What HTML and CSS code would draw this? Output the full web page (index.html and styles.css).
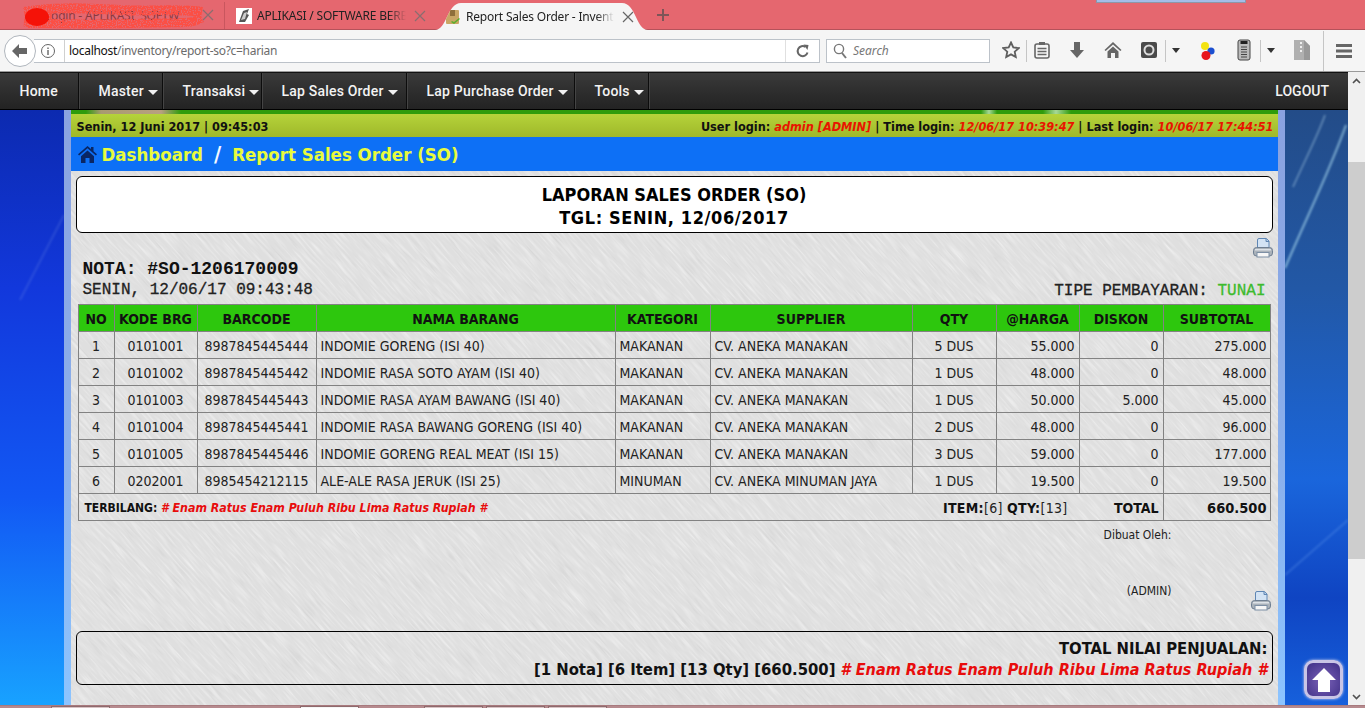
FILE: index.html
```html
<!DOCTYPE html>
<html lang="id">
<head>
<meta charset="utf-8">
<title>Report Sales Order - Inventory</title>
<link rel="stylesheet" href="styles.css">
</head>
<body>
<div class="browser">
  <div class="tabstrip">
    <div class="tab tab-one">
      <span class="tab-label">Login - APLIKASI  SOFTW</span>
      <svg class="scribble" width="190" height="26" viewBox="0 0 190 26"><defs><filter id="spray" filterUnits="userSpaceOnUse" x="0" y="0" width="190" height="26"><feTurbulence type="fractalNoise" baseFrequency="0.8" numOctaves="1" seed="4" result="n"/><feColorMatrix in="n" type="matrix" values="0 0 0 0 0.96  0 0 0 0 0.08  0 0 0 0 0.06  0 0 0 16 -6.4" result="m"/><feComposite in="m" in2="SourceAlpha" operator="in"/></filter></defs><path d="M4 9 C 30 4, 60 5, 100 7 S 160 5, 182 9" fill="none" stroke="#f00" stroke-width="10" filter="url(#spray)"/><path d="M4 19 C 40 22, 90 21, 130 20 S 170 21, 182 15" fill="none" stroke="#f00" stroke-width="9" filter="url(#spray)"/><path d="M8 14h24" stroke="#f00" stroke-width="22" filter="url(#spray)"/><ellipse cx="17" cy="14" rx="12" ry="9" fill="#f51208"/></svg>
      <svg class="tab-close" width="12" height="12" viewBox="0 0 12 12"><path d="M1 1l10 10M11 1L1 11" stroke="#8a6d6f" stroke-width="1.2"/></svg>
    </div>
    <div class="tab tab-two">
      <svg class="favicon" width="16" height="16" viewBox="0 0 16 16"><rect width="16" height="16" fill="#fff"/><path d="M3 14L7 3l6-2-2 5 2 1-4 7z" fill="#555"/><path d="M5 12l3-7 3-1-2 7z" fill="#ccc"/></svg>
      <span class="tab-label fade">APLIKASI / SOFTWARE BERB</span>
      <svg class="tab-close" width="12" height="12" viewBox="0 0 12 12"><path d="M1 1l10 10M11 1L1 11" stroke="#8a6d6f" stroke-width="1.2"/></svg>
    </div>
    <div class="tab tab-active">
      <svg class="favicon" width="16" height="16" viewBox="0 0 16 16"><rect x="1" y="1" width="13" height="14" rx="1" fill="#c9a765"/><rect x="5" y="1" width="5" height="6" fill="#8e6f3a"/><path d="M6 13l3 2 6-5-1-1-5 4-2-1z" fill="#5cae2e"/></svg>
      <span class="tab-label fade">Report Sales Order - Inventor</span>
      <svg class="tab-close" width="12" height="12" viewBox="0 0 12 12"><path d="M1 1l10 10M11 1L1 11" stroke="#666" stroke-width="1.2"/></svg>
    </div>
    <svg class="new-tab" width="12" height="12" viewBox="0 0 12 12"><path d="M6 0v12M0 6h12" stroke="#7d5558" stroke-width="2"/></svg>
    <div class="window-peek"></div>
  </div>

  <div class="toolbar">
    <button class="back" type="button"><svg width="18" height="16" viewBox="0 0 18 16"><path d="M8 1L1 8l7 7v-4h8V5H8z" fill="#666"/></svg></button>
    <div class="urlbar">
      <svg class="info" width="16" height="16" viewBox="0 0 16 16"><circle cx="8" cy="8" r="6.5" fill="none" stroke="#666"/><path d="M8 4.5v1.5M8 7v5" stroke="#666" stroke-width="1.4"/></svg>
      <span class="url"><b>localhost</b>/inventory/report-so?c=harian</span>
      <span class="reload"><svg width="14" height="14" viewBox="0 0 14 14"><path d="M11.5 8.5A5 5 0 1 1 9.5 3" fill="none" stroke="#666" stroke-width="2"/><path d="M7.5 0.5l5 .5-1 5z" fill="#666"/></svg></span>
    </div>
    <div class="searchbar">
      <svg width="15" height="16" viewBox="0 0 15 16"><circle cx="6" cy="6" r="4.6" fill="none" stroke="#777" stroke-width="1.4"/><path d="M9 10l4 5" stroke="#777" stroke-width="2"/></svg>
      <span>Search</span>
    </div>
    <div class="tools">
      <svg class="t-star" width="18" height="18" viewBox="0 0 18 18"><path d="M9 1.5l2.3 5 5.4.6-4 3.6 1.1 5.4L9 13.4l-4.8 2.7 1.1-5.4-4-3.6 5.4-.6z" fill="none" stroke="#5f5f5f" stroke-width="1.8"/></svg>
      <i class="sep s1"></i>
      <svg class="t-clip" width="16" height="18" viewBox="0 0 16 18"><rect x="1" y="3" width="14" height="14" rx="2" fill="none" stroke="#666" stroke-width="1.6"/><rect x="5" y="1" width="6" height="3" fill="#666"/><path d="M3.5 7.5h9M3.5 10.500h9M3.500 13.500h9" stroke="#666" stroke-width="1.4"/></svg>
      <svg class="t-down" width="16" height="18" viewBox="0 0 16 18"><path d="M5 1h6v8h4l-7 8-7-8h4z" fill="#666"/></svg>
      <svg class="t-home" width="18" height="18" viewBox="0 0 18 18"><path d="M9 1L0.500 9l1.200 1L9 3.500 16.300 10l1.200-1z" fill="#666"/><path d="M3.500 10.500L9 5.500l5.500 5V17h-3.500v-5H7v5H3.500z" fill="#666"/></svg>
      <svg class="t-cam" width="16" height="18" viewBox="0 0 16 18"><rect y="1" width="16" height="16" rx="2" fill="#4a4a4a"/><circle cx="8" cy="9" r="4.500" fill="none" stroke="#ddd" stroke-width="2"/></svg>
      <i class="sep s2"></i>
      <i class="drop d1"></i>
      <svg class="t-dots" width="16" height="20" viewBox="0 0 16 20"><circle cx="5" cy="5" r="4" fill="#f3e312"/><circle cx="11" cy="10" r="3.600" fill="#1c4fd0"/><circle cx="6" cy="14.500" r="4.500" fill="#e8141c"/></svg>
      <svg class="t-bat" width="14" height="22" viewBox="0 0 14 22"><rect x="1" y="1" width="12" height="20" rx="2" fill="#bbb" stroke="#444"/><rect x="3.500" y="2" width="7" height="3" fill="#222"/><path d="M4 8h6M4 10.500h6M4 13h6M4 15.500h6M4 18h6" stroke="#444"/></svg>
      <i class="sep s3"></i>
      <i class="drop d2"></i>
      <svg class="t-zip" width="16" height="20" viewBox="0 0 16 20"><path d="M0 0h10l6 6v14H0z" fill="#b0b0b0"/><path d="M10 0l6 6v14h-6z" fill="#999"/><path d="M6 3h2M6 7h2M6 11h2" stroke="#eee" stroke-width="2"/></svg>
      <i class="sep s4"></i>
      <svg class="t-menu" width="16" height="16" viewBox="0 0 16 16"><path d="M0 2.500h16M0 8h16M0 13.500h16" stroke="#666" stroke-width="3"/></svg>
    </div>
  </div>

  <div class="window">
    <div class="viewport">
      <nav class="navbar">
        <a class="nav-item home">Home</a>
        <a class="nav-item master">Master<i class="caret"></i></a>
        <a class="nav-item transaksi">Transaksi<i class="caret"></i></a>
        <a class="nav-item lapso">Lap Sales Order<i class="caret"></i></a>
        <a class="nav-item lappo">Lap Purchase Order<i class="caret"></i></a>
        <a class="nav-item tools-menu">Tools<i class="caret"></i></a>
        <a class="logout">LOGOUT</a>
      </nav>
      <div class="stage">
        <svg class="backdrop" width="1348" height="595" viewBox="0 0 1348 595" preserveAspectRatio="none" aria-hidden="true">
          <defs>
            <linearGradient id="bgL" x1="0" y1="0" x2="0" y2="1"><stop offset="0" stop-color="#0c2ab0"/><stop offset=".3" stop-color="#1238dc"/><stop offset=".65" stop-color="#1258f4"/><stop offset="1" stop-color="#18a2ff"/></linearGradient>
            <linearGradient id="bgR" x1="0" y1="0" x2="0" y2="1"><stop offset="0" stop-color="#234c88"/><stop offset=".3" stop-color="#2258a6"/><stop offset=".62" stop-color="#1a66dc"/><stop offset=".82" stop-color="#0f44c2"/><stop offset="1" stop-color="#1660dc"/></linearGradient>
            <filter id="soft"><feGaussianBlur stdDeviation="1"/></filter>
          </defs>
          <rect width="66" height="595" fill="url(#bgL)"/>
          <rect x="1284" width="64" height="595" fill="url(#bgR)"/>
          <path d="M20 190 L64 105" stroke="#8ea8ea" stroke-width="2" opacity=".2" filter="url(#soft)" fill="none"/>
          <path d="M1285 158 C1310 100 1330 60 1346 15" stroke="#a8d8ee" stroke-width="2" opacity=".7" fill="none" filter="url(#soft)"/>
          <path d="M1293 77 C1305 50 1318 25 1325 5" stroke="#9cc0dc" stroke-width="1.500" opacity=".6" fill="none" filter="url(#soft)"/>
          <path d="M1285 465 L1348 410" stroke="#6aa0f0" stroke-width="2" opacity=".3" fill="none" filter="url(#soft)"/>
        </svg>
        <main class="sheet">
          <svg class="brushed" width="1207" height="595" viewBox="0 0 1207 595" aria-hidden="true">
            <defs>
              <filter id="brush" filterUnits="userSpaceOnUse" x="-100" y="-1300" width="2200" height="2200">
                <feTurbulence type="fractalNoise" baseFrequency="0.035 0.5" numOctaves="2" seed="7" result="n"/>
                <feColorMatrix in="n" type="matrix" values="0 0 0 0 1  0 0 0 0 1  0 0 0 0 1  1.2 0 0 0 -.55" result="light"/>
                <feColorMatrix in="n" type="matrix" values="0 0 0 0 .45  0 0 0 0 .45  0 0 0 0 .45  0 -.7 0 0 .3" result="dark"/>
                <feMerge><feMergeNode in="dark"/><feMergeNode in="light"/></feMerge>
              </filter>
            </defs>
            <rect x="-100" y="-1300" width="2200" height="2200" fill="#fff" filter="url(#brush)" transform="rotate(48)"/>
          </svg>
          <div class="banner"></div>
          <div class="infobar">
            <span>Senin, 12 Juni 2017 | 09:45:03</span>
            <span>User login: <em>admin [ADMIN]</em> | Time login: <em>12/06/17 10:39:47</em> | Last login: <em>10/06/17 17:44:51</em></span>
          </div>
          <div class="crumbs">
            <svg class="crumb-home" width="19" height="17" viewBox="0 0 19 17"><path d="M9.500 0L0 8.300l1.100 1.200L9.500 2.300l8.400 7.200L19 8.300 15.500 5.200V1h-2.500v2zM3 10.200L9.500 4.500l6.500 5.700V17h-4.500v-5h-4v5H3z" fill="#0a2663"/></svg>
            <a>Dashboard</a><span class="slash">/</span><a>Report Sales Order (SO)</a>
          </div>
          <section class="report-title">LAPORAN SALES ORDER (SO)<br><span class="report-date">TGL: SENIN, 12/06/2017</span></section>
          <div class="print-row">
            <svg class="printer" width="20" height="20" viewBox="0 0 20 20"><use href="#printer-glyph"/></svg>
          </div>
          <div class="nota">NOTA: #SO-1206170009</div>
          <div class="nota-meta">
            <span>SENIN, 12/06/17 09:43:48</span>
            <span class="pay">TIPE PEMBAYARAN: <b>TUNAI</b></span>
          </div>
          <table class="items">
            <colgroup>
              <col class="c-no"><col class="c-kode"><col class="c-bar"><col class="c-nama"><col class="c-kat"><col class="c-sup"><col class="c-qty"><col class="c-harga"><col class="c-disk"><col class="c-sub">
            </colgroup>
            <thead>
              <tr><th>NO</th><th>KODE BRG</th><th>BARCODE</th><th>NAMA BARANG</th><th>KATEGORI</th><th>SUPPLIER</th><th>QTY</th><th>@HARGA</th><th>DISKON</th><th>SUBTOTAL</th></tr>
            </thead>
            <tbody>
              <tr><td class="mid">1</td><td class="mid">0101001</td><td class="mid">8987845445444</td><td>INDOMIE GORENG (ISI 40)</td><td>MAKANAN</td><td>CV. ANEKA MANAKAN</td><td class="mid">5 DUS</td><td class="num">55.000</td><td class="num">0</td><td class="num">275.000</td></tr>
              <tr><td class="mid">2</td><td class="mid">0101002</td><td class="mid">8987845445442</td><td>INDOMIE RASA SOTO AYAM (ISI 40)</td><td>MAKANAN</td><td>CV. ANEKA MANAKAN</td><td class="mid">1 DUS</td><td class="num">48.000</td><td class="num">0</td><td class="num">48.000</td></tr>
              <tr><td class="mid">3</td><td class="mid">0101003</td><td class="mid">8987845445443</td><td>INDOMIE RASA AYAM BAWANG (ISI 40)</td><td>MAKANAN</td><td>CV. ANEKA MANAKAN</td><td class="mid">1 DUS</td><td class="num">50.000</td><td class="num">5.000</td><td class="num">45.000</td></tr>
              <tr><td class="mid">4</td><td class="mid">0101004</td><td class="mid">8987845445441</td><td>INDOMIE RASA BAWANG GORENG (ISI 40)</td><td>MAKANAN</td><td>CV. ANEKA MANAKAN</td><td class="mid">2 DUS</td><td class="num">48.000</td><td class="num">0</td><td class="num">96.000</td></tr>
              <tr><td class="mid">5</td><td class="mid">0101005</td><td class="mid">8987845445446</td><td>INDOMIE GORENG REAL MEAT (ISI 15)</td><td>MAKANAN</td><td>CV. ANEKA MANAKAN</td><td class="mid">3 DUS</td><td class="num">59.000</td><td class="num">0</td><td class="num">177.000</td></tr>
              <tr><td class="mid">6</td><td class="mid">0202001</td><td class="mid">8985454212115</td><td>ALE-ALE RASA JERUK (ISI 25)</td><td>MINUMAN</td><td>CV. ANEKA MINUMAN JAYA</td><td class="mid">1 DUS</td><td class="num">19.500</td><td class="num">0</td><td class="num">19.500</td></tr>
            </tbody>
            <tfoot>
              <tr>
                <td colspan="9" class="foot-left">
                  <div class="foot-flex">
                    <span class="terbilang">TERBILANG: <em># Enam Ratus Enam Puluh Ribu Lima Ratus Rupiah #</em></span>
                    <span class="counts"><b>ITEM:</b>[6] <b>QTY:</b>[13]</span>
                    <span class="total-label">TOTAL</span>
                  </div>
                </td>
                <td class="num total-value">660.500</td>
              </tr>
            </tfoot>
          </table>
          <div class="sign-row">
            <div class="sign">
              <span>Dibuat Oleh:</span>
              <span>(ADMIN)</span>
            </div>
            <svg class="printer" width="20" height="20" viewBox="0 0 20 20">
              <g id="printer-glyph">
                <path d="M4.500 10V2A1.500 1.500 0 0 1 6 .5h7.500L16 3v7z" fill="#d3e3f4" stroke="#5f86b4"/>
                <path d="M13 .5V3.500h3" fill="#b4cce6" stroke="#5f86b4"/>
                <rect x="0.500" y="9.500" width="19" height="8.500" rx="3" fill="#aab2ba" stroke="#6f7f92"/>
                <rect x="2" y="11" width="16" height="1.500" fill="#dde2e7"/>
                <rect x="4" y="14.500" width="12" height="4.500" fill="#f6f6f6" stroke="#7d8fa5"/>
              </g>
            </svg>
          </div>
          <section class="grand-total">
            <strong>TOTAL NILAI PENJUALAN:</strong>
            <div><strong>[1 Nota] [6 Item] [13 Qty] [660.500]</strong> <em># Enam Ratus Enam Puluh Ribu Lima Ratus Rupiah #</em></div>
          </section>
        </main>
        <button class="to-top" type="button" aria-label="Ke atas"><svg width="26" height="26" viewBox="0 0 26 26"><path d="M13 1L1 13h6v12h12V13h6z" fill="#fff"/></svg></button>
      </div>
    </div>
    <div class="scrollbar">
      <svg width="9" height="6" viewBox="0 0 9 6"><path d="M1 5l3.500-3.500L8 5" fill="none" stroke="#505050" stroke-width="1.600"/></svg>
      <div class="thumb"></div>
      <svg width="9" height="6" viewBox="0 0 9 6"><path d="M1 1l3.500 3.500L8 1" fill="none" stroke="#505050" stroke-width="1.600"/></svg>
    </div>
  </div>
  <div class="taskbar">
    <i class="task t1"></i><i class="task t2"></i><i class="task t3"></i><i class="task t4"></i><i class="task t5"></i>
  </div>
</div>
</body>
</html>
```

FILE: styles.css
```css
* { box-sizing: border-box; }
html, body { margin: 0; height: 100%; overflow: hidden; }
body { font-family: "Noto Sans", sans-serif; background: #f5f5f5; }
.browser { width: 1365px; height: 708px; display: flex; flex-direction: column; overflow: hidden; }

/* tabs */
.tabstrip { height: 30px; flex: none; background: #e5676f; border-bottom: 1px solid #b4525a; display: flex; align-items: flex-end; position: relative; }
.tab { display: flex; align-items: center; height: 27px; font-size: 12px; letter-spacing: -.2px; color: #222; flex: none; position: relative; }
.tab-one { width: 224px; padding-left: 45px; }
.tab-one .tab-label { width: 155px; white-space: pre; color: #8a3a3f; }
.scribble { position: absolute; left: 20px; top: 1px; }
.tab-one .tab-close { position: absolute; left: 202px; top: 7px; }
.tab-two { width: 211px; padding-left: 11px; border-left: 1px solid #c9565e; }
.tab-two .favicon { margin-right: 5px; }
.tab-two .tab-label { width: 149px; }
.tab-two .tab-close { margin-left: 8px; }
.tab-label { white-space: nowrap; }
.fade { -webkit-mask-image: linear-gradient(90deg, #000 88%, transparent); mask-image: linear-gradient(90deg, #000 88%, transparent); }
.tab-active { width: 213px; height: 27px; margin-bottom: -1px; padding-left: 10px; background: #f5f5f5; clip-path: path("M0 27 C12 27 12 0 26 0 L187 0 C201 0 201 27 213 27 Z"); }
.tab-active .favicon { margin-right: 5px; }
.tab-active .tab-label { width: 148px; }
.tab-active .tab-close { margin-left: 8px; }
.new-tab { margin: 0 0 8px 9px; flex: none; }
.window-peek { position: absolute; left: 1096px; top: 0; width: 150px; height: 3px; background: #a4bde8; border: 1px solid #8d97a8; border-top: 0; }

/* toolbar */
.toolbar { height: 42px; flex: none; background: #f5f5f5; border-bottom: 1px solid #9a9a9a; display: flex; align-items: center; position: relative; padding-left: 4px; }
.back { width: 32px; height: 32px; border-radius: 50%; border: 1px solid #b0b6bd; background: #fff; padding: 0; margin-right: -2px; position: relative; z-index: 1; display: flex; align-items: center; justify-content: center; }
.urlbar { width: 786px; height: 24px; background: #fff; border: 1px solid #bcc2c9; border-left: 0; display: flex; align-items: center; }
.info { margin-left: 6px; flex: none; }
.url { margin-left: 8px; font-size: 12px; letter-spacing: -.3px; color: #6b6b6b; flex: 1; border-left: 1px solid #d0d0d0; padding-left: 4px; line-height: 22px; }
.url b { font-weight: 400; color: #111; }
.reload { width: 34px; height: 22px; border-left: 1px solid #e0e0e0; display: flex; align-items: center; justify-content: center; }
.searchbar { width: 164px; height: 24px; margin-left: 6px; background: #fff; border: 1px solid #bcc2c9; display: flex; align-items: center; padding-left: 6px; gap: 5px; font-size: 12px; font-style: italic; color: #777; }
.tools { flex: 1; position: relative; height: 40px; }
.tools > * { position: absolute; }
.t-star { left: 12px; top: 10px; }
.s1 { left: 36px; } .s2 { left: 175px; } .s3 { left: 270px; } .s4 { left: 333px; top: 0 !important; height: 40px !important; }
.sep { width: 1px; height: 22px; top: 9px; background: #c5c5c5; }
.t-clip { left: 44px; top: 10px; }
.t-down { left: 79px; top: 10px; }
.t-home { left: 114px; top: 10px; }
.t-cam { left: 151px; top: 10px; }
.drop { width: 0; height: 0; border: 4px solid transparent; border-top: 5px solid #333; border-bottom: 0; top: 17px; }
.d1 { left: 182px; } .d2 { left: 277px; }
.t-dots { left: 210px; top: 10px; }
.t-bat { left: 247px; top: 8px; }
.t-zip { left: 304px; top: 9px; }
.t-menu { left: 346px; top: 12px; }

/* page */
.window { flex: 1; min-height: 0; display: flex; }
.viewport { width: 1348px; display: flex; flex-direction: column; min-height: 0; }
.scrollbar { width: 17px; background: #f0f0f0; display: flex; flex-direction: column; align-items: center; justify-content: space-between; padding: 6px 0 5px; }
.thumb { width: 17px; height: 397px; margin-top: 78px; margin-bottom: auto; background: #cdcdcd; }
.navbar { height: 38px; flex: none; display: flex; align-items: stretch; background: linear-gradient(#3a3a3a, #2e2e2e 50%, #232323); border-top: 1px solid #111; border-bottom: 1px solid #000; position: relative; z-index: 2; }
.nav-item { display: flex; align-items: center; padding-left: 19.5px; color: #f2f2f2; font: 500 14px/1 Roboto, sans-serif; letter-spacing: .2px; border-right: 1px solid #0c0c0c; box-shadow: 1px 0 0 #444; white-space: nowrap; }
.home { width: 79px; }
.master { width: 84px; }
.transaksi { width: 99px; }
.lapso { width: 145px; }
.lappo { width: 168px; }
.tools-menu { width: 74px; }
.caret { display: block; width: 0; height: 0; margin: 3px 0 0 4px; border: 5px solid transparent; border-top: 5px solid #f2f2f2; border-bottom: 0; }
.logout { margin-left: auto; padding-right: 19px; align-self: center; color: #f2f2f2; font: 500 14px/1 Roboto, sans-serif; }

.stage { flex: 1; min-height: 0; position: relative; display: flex; justify-content: center; overflow: hidden; background: #fff; }
.backdrop { position: absolute; left: 0; top: 0; }
.sheet { position: relative; z-index: 0; width: 1221px; border-left: 7px solid #8caae8; border-right: 7px solid #8caae8; border-image: linear-gradient(#8aa2e0, #8ab0ec 60%, #8cc4ff) 1; background-color: #dfdfdf; display: flex; flex-direction: column; font-family: "DejaVu Sans Condensed", "DejaVu Sans", sans-serif; font-stretch: condensed; }
.brushed { position: absolute; left: 0; top: 0; z-index: -1; }
.banner { height: 4px; flex: none; background: linear-gradient(90deg, #2f9c0c 15px, #a89a70 30px, #b8a080 90px, #2f9c0c 110px, #2f9c0c 910px, #a8d898 918px, #2f9c0c 926px, #2f9c0c 972px, #a8d898 985px, #2f9c0c 1000px); }
.infobar { height: 23px; flex: none; background: linear-gradient(#b5d33a, #9fb82a); display: flex; justify-content: space-between; align-items: center; padding: 2px 4px 0 6px; font-size: 12.6px; font-weight: 700; color: #111; }
.infobar em { color: #e81400; font-weight: 700; }
.crumbs { height: 34px; flex: none; background: #0d70f6; display: flex; align-items: center; padding: 1px 0 0 7px; font-size: 18.500px; font-weight: 700; color: #e8fb3c; }
.crumb-home { margin-right: 5px; }
.slash { margin: 0 11px; color: #f4f8ff; font-size: 22px; }
.report-title { height: 57px; margin: 5px 5px 0; flex: none; background: #fff; border: 1px solid #000; border-radius: 6px; text-align: center; font-size: 18px; font-weight: 700; line-height: 23px; padding-top: 6px; color: #000; }
.report-date { letter-spacing: .6px; }
.print-row { height: 20px; margin-top: 5px; flex: none; display: flex; justify-content: flex-end; padding-right: 5px; }
.printer { display: block; flex: none; }
.nota { height: 20px; margin-top: 1px; flex: none; padding-left: 12px; font: 700 18px/20px "Liberation Mono", monospace; color: #111; }
.nota-meta { height: 20px; margin: 1px 0 4px; flex: none; display: flex; justify-content: space-between; padding: 0 12px; font: 400 16px/20px "Liberation Mono", monospace; color: #222; -webkit-text-stroke: .3px #222; }
.pay { padding-top: 1px; }
.nota-meta b { color: #3dbb2d; font-weight: 400; -webkit-text-stroke: .3px #3dbb2d; }

.items { width: 1192px; margin-left: 7px; border-collapse: collapse; table-layout: fixed; font-size: 14px; color: #222; flex: none; }
.c-no { width: 36px; } .c-kode { width: 83px; } .c-bar { width: 119px; } .c-nama { width: 299px; } .c-kat { width: 95px; } .c-sup { width: 202px; } .c-qty { width: 84px; } .c-harga { width: 83px; } .c-disk { width: 84px; } .c-sub { width: 107px; }
.items th, .items td { border: 1px solid #828282; padding: 1px 4px 0; overflow: hidden; white-space: nowrap; }
.items td:last-child { padding-right: 3px; }
.items th { height: 27px; background: #2dc70d; color: #111; font-weight: 700; text-align: center; padding: 1px 0 0; }
.items td { height: 27px; }
.mid { text-align: center; }
.num { text-align: right; }
.foot-flex { display: flex; align-items: center; padding-left: 2px; }
.terbilang { font-size: 12px; font-weight: 700; color: #111; }
.terbilang em { color: #e80c0c; font-size: 12.300px; }
.counts { margin-left: auto; letter-spacing: .3px; }
.counts b { font-weight: 700; color: #111; }
.total-label { width: 91px; text-align: right; font-weight: 700; color: #111; }
.total-value { font-weight: 700; color: #111; font-size: 14.500px; }
.sign-row { height: 84px; margin: 6px 0 0; flex: none; display: flex; justify-content: flex-end; align-items: flex-end; padding-right: 7px; }
.sign { width: 180px; height: 72px; margin-bottom: 12px; margin-right: 79px; display: flex; flex-direction: column; justify-content: space-between; align-items: flex-end; font-size: 12px; line-height: 16px; color: #222; }
.grand-total { height: 54px; margin: 20px 5px 0; flex: none; border: 1px solid #000; border-radius: 6px; text-align: right; padding: 6px 4px 0 0; font-size: 16.500px; line-height: 21px; font-weight: 700; color: #111; }
.grand-total em { color: #e80c0c; font-size: 16.100px; }
.to-top { position: absolute; left: 1304px; top: 550px; width: 39px; height: 39px; padding: 0; border: 3px solid #c9c5e6; border-radius: 9px; background: radial-gradient(circle at 50% 55%, #7b62b8, #3e2f86); box-shadow: 0 0 3px #d8d8f0; display: flex; align-items: center; justify-content: center; }
.taskbar { height: 3px; flex: none; background: #b68a8e; border-top: 1px solid #a87a7e; display: flex; }
.task { display: block; width: 59px; height: 3px; background: #d9c3c5; border: 1px solid #8e6a6d; border-bottom: 0; }
.t1 { margin-left: 51px; }
.t2 { margin-left: 190px; background: #f5f5f5; }
.t3 { margin-left: 65px; }
.t4, .t5 { margin-left: 3px; }
```
